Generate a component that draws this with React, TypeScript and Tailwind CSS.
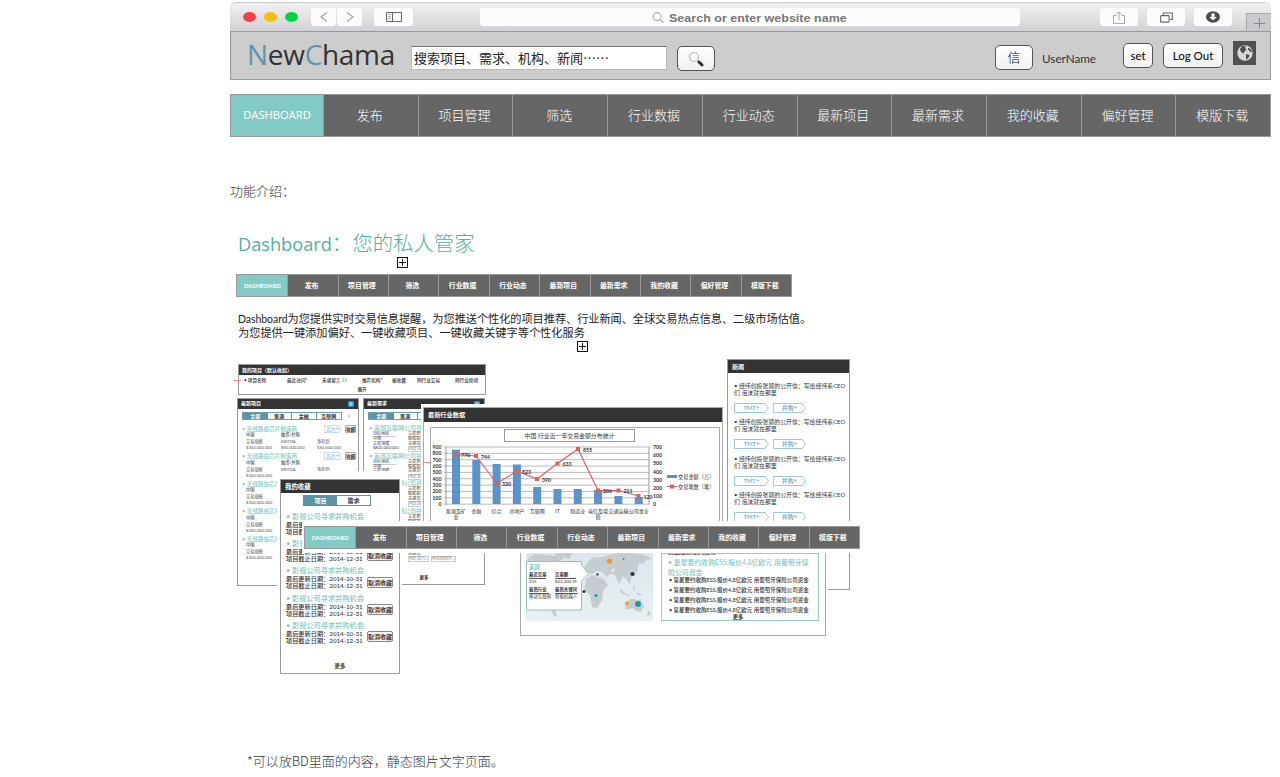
import React from "react";

const NAV = ["DASHBOARD", "发布", "项目管理", "筛选", "行业数据", "行业动态", "最新项目", "最新需求", "我的收藏", "偏好管理", "模版下载"];

function MiniNav() {
  return (
    <div className="grid h-[23px] w-[556px] grid-cols-11 border border-[#999] bg-[#666] text-[6.9px] font-bold leading-none text-white">
      {NAV.map((n, i) => (
        <div
          key={n}
          className={
            i === 0
              ? "flex items-center justify-center bg-[#84cac4] font-['Lato','Noto_Sans_CJK_SC',sans-serif] text-[5.9px]"
              : "flex items-center justify-center border-l border-[#999] pr-[3px]"
          }
        >
          {n}
        </div>
      ))}
    </div>
  );
}

function Cross() {
  return (
    <svg width="11" height="11" viewBox="0 0 11 11" fill="none" stroke="#111">
      <rect x=".5" y=".5" width="10" height="10" fill="#fff" />
      <path d="M5.5 2v7M2 5.5h7" />
    </svg>
  );
}

function ChromeButton({ className, children }: { className: string; children: React.ReactNode }) {
  return <div className={"flex h-[18px] items-center justify-center rounded-[3px] bg-[#fcfcfc] " + className}>{children}</div>;
}

function BrowserBar() {
  return (
    <div className="flex h-[29px] items-center rounded-t-[6px] border-t border-[#cfcdd0] bg-linear-to-b from-[#f1f0f2] to-[#d3d1d5] pl-[13px]">
      <div className="flex gap-2">
        <i className="h-[10px] w-[13px] rounded-[50%] bg-[#fc3f44]" />
        <i className="h-[10px] w-[13px] rounded-[50%] bg-[#fdbc09]" />
        <i className="h-[10px] w-[13px] rounded-[50%] bg-[#04d53f]" />
      </div>
      <ChromeButton className="ml-[13px] w-[25px]">
        <svg width="8" height="12" viewBox="0 0 8 12" fill="none" stroke="#a5a5a5" strokeWidth="1.2"><path d="M7 1.5 1 6l6 4.5" /></svg>
      </ChromeButton>
      <ChromeButton className="ml-[1px] w-[25px]">
        <svg width="8" height="12" viewBox="0 0 8 12" fill="none" stroke="#a5a5a5" strokeWidth="1.2"><path d="m1 1.5 6 4.5-6 4.5" /></svg>
      </ChromeButton>
      <ChromeButton className="ml-[12px] w-[39px]">
        <svg width="16" height="10" viewBox="0 0 16 10" fill="none" stroke="#666"><path d="M.5.5h15v9H.5zM6.5.5v9" /><path d="M2 2.5h3M2 4.5h3M2 6.500h3" strokeWidth=".7" stroke="#999" /></svg>
      </ChromeButton>
      <ChromeButton className="ml-[67px] w-[540px] gap-[5px]">
        <svg width="12" height="11" viewBox="0 0 12 11" fill="none" stroke="#aaa" strokeWidth="1.1"><circle cx="5" cy="4.600" r="4" /><path d="m8 7.500 3.500 3" /></svg>
        <span className="w-[180px] whitespace-nowrap">
          <span className="block w-[150px] origin-left scale-x-[1.19] pt-px font-['Liberation_Sans',sans-serif] text-[10.5px] font-bold leading-[12px] tracking-[0.02px] text-[#777]">Search or enter website name</span>
        </span>
      </ChromeButton>
      <ChromeButton className="ml-[80px] w-[38px]">
        <svg width="12" height="13" viewBox="0 0 12 13" fill="none" stroke="#aaa"><path d="M3.500 4.500h-3v8h11v-8h-3M6 9V1M3.500 3.200 6 .8l2.500 2.400" /></svg>
      </ChromeButton>
      <ChromeButton className="ml-[9px] w-[38px]">
        <svg width="13" height="11" viewBox="0 0 13 11" fill="none" stroke="#666" strokeWidth="1.1"><rect x=".6" y="3.600" width="8.500" height="6.500" rx=".8" /><path d="M3.300 3V1h9v6.500H10" /></svg>
      </ChromeButton>
      <ChromeButton className="ml-[9px] w-[38px]">
        <svg width="14" height="12" viewBox="0 0 14 12"><ellipse cx="7" cy="6" rx="7" ry="5.700" fill="#4a4a4a" /><path d="M5.500 2.500h3V6h2.300L7 9.500 3.200 6h2.300z" fill="#fff" /></svg>
      </ChromeButton>
      <div className="ml-auto flex h-[18px] w-[25px] items-center justify-center self-end border-l border-t border-[#aaa] bg-[#cbc9cd]">
        <svg width="11" height="10" viewBox="0 0 11 10" stroke="#888"><path d="M5.500 0v10M0 5.500h11" /></svg>
      </div>
    </div>
  );
}

const BTN = "flex h-[25px] items-center justify-center rounded-[5px] border border-[#555] bg-linear-to-b from-white to-[#f0f0f0] text-black";

function AppHeader() {
  return (
    <div className="flex h-[49px] items-start border border-[#999] bg-[#ccc] font-['Lato','Noto_Sans_CJK_SC',sans-serif]">
      <div className="ml-[16px] mt-[7px] w-[150px] whitespace-nowrap font-['Open_Sans',sans-serif] text-[28px] leading-[31px] tracking-[-0.3px] text-[#333]">
        <span className="text-[#5d95ab]">N</span>ew<span className="text-[#5d95ab]">C</span>hama
      </div>
      <div lang="zh-CN" className="ml-[14px] mt-[14px] flex h-[24px] w-[256px] items-center whitespace-nowrap border border-[#bbb] border-t-[#777] bg-white pl-[2px] font-['Noto_Sans_CJK_SC',sans-serif] text-[13px] text-[#222]">
        搜索项目、需求、机构、新闻⋯⋯
      </div>
      <div className={BTN + " ml-[10px] mt-[14px] w-[38px]"}>
        <svg width="16" height="16" viewBox="0 0 16 16" fill="none"><circle cx="6" cy="6" r="4.500" stroke="#bbb" strokeWidth="1.200" /><path d="m10 10 1.500 1.500" stroke="#777" strokeWidth="2" /><path d="m11 11 3 3" stroke="#333" strokeWidth="3" strokeLinecap="round" /></svg>
      </div>
      <div className={BTN + " ml-[280px] mt-[13px] w-[38px] text-[13px] font-light"}>信</div>
      <div className="ml-[9px] mt-[18px] w-[60px] text-[11.7px] leading-[16px] text-[#333]">UserName</div>
      <div className={BTN + " ml-[21px] mt-[11px] w-[30px] text-[11.5px]"}>set</div>
      <div className={BTN + " ml-[10px] mt-[11px] w-[60px] text-[11.5px]"}>Log Out</div>
      <div className="ml-[10px] mt-[9px] flex h-[24px] w-[23px] items-center justify-center bg-[#505050]">
        <svg width="16" height="16" viewBox="0 0 16 16"><circle cx="8" cy="8" r="7.700" fill="#d8d8d8" /><path d="M5 1.200 9 .8 8 3l1.500 1.500L8 6 6.500 8.500 4 7 3 4zM11 2.500l3 2 1.500 3-2.500-1-2-2zM9 9l3.500 1-1 3-2.500 1.500z" fill="#505050" /></svg>
      </div>
    </div>
  );
}

function MainNav() {
  return (
    <div className="flex h-[43px] border border-[#999] bg-[#666] text-[13px] font-light text-white">
      {NAV.map((n, i) => (
        <div
          key={n}
          className={
            i === 0
              ? "flex w-[92px] items-center justify-center bg-[#84cac4] font-['Open_Sans',sans-serif] text-[11.2px] font-normal"
              : "flex flex-1 items-center justify-center border-l border-[#999] pb-[2px] pr-[2px]"
          }
        >
          {n}
        </div>
      ))}
    </div>
  );
}

const HEAD = "flex items-center bg-[#333] font-bold text-white";

function Tag({ children, className }: { children: React.ReactNode; className: string }) {
  return (
    <div className={"relative flex items-center justify-center text-[#6b9fb3] " + className}>
      <svg className="absolute inset-0 h-full w-full" viewBox="0 0 34 10" preserveAspectRatio="none" fill="none" stroke="#8bb8c8" strokeWidth=".8"><path d="M.5.500h29.500L33.500 5 30 9.500H.5z" /></svg>
      <span className="relative">{children}</span>
    </div>
  );
}

function MyProjects() {
  return (
    <div className="absolute left-[8px] top-[9px] h-[31px] w-[248px] border border-[#999] bg-white text-[4.6px] font-medium leading-[6px] text-[#333]">
      <div className={HEAD + " h-[10px] pl-[3px] text-[5px]"}>我的项目（默认收起）</div>
      <div className="mt-[2px] flex whitespace-nowrap">
        <span className="w-[43px] pl-[5px]">• 项目名称</span>
        <span className="w-[35px] pl-[5px]">最近访问<b className="text-red-600">*</b></span>
        <span className="w-[40px] pl-[5px]">未读留言 <span className="text-[#4a98d0]">15</span></span>
        <span className="w-[30px] pl-[5px]">推荐机构<b className="text-red-600">*</b></span>
        <span className="w-[25px] pl-[5px]">被收藏</span>
        <span className="w-[38px] pl-[5px]">同行业交易</span>
        <span className="pl-[5px]">同行业新闻</span>
      </div>
      <div className="mt-[3px] text-center">展开</div>
    </div>
  );
}

function Gear() {
  return <svg width="6" height="6" viewBox="0 0 6 6"><rect width="6" height="6" rx="1" fill="#1598e8" /><circle cx="3" cy="3" r="1.300" fill="none" stroke="#fff" strokeWidth=".8" /></svg>;
}

function PanelTabs() {
  return (
    <div className="mt-[3px] flex h-[8px] items-center pl-[4px] text-[5px] leading-none text-[#333]">
      <div className="grid h-[8px] w-[100px] shrink-0 grid-cols-4 border border-[#6d9eae]">
        <b className="flex items-center justify-center bg-[#5b93a7] text-white">全部</b>
        <b className="flex items-center justify-center border-r border-[#6d9eae]">能源</b>
        <b className="flex items-center justify-center border-r border-[#6d9eae]">金融</b>
        <b className="flex items-center justify-center">互联网</b>
      </div>
      <span className="ml-[5px] text-[6px] text-[#5b93a7]">&gt;</span>
    </div>
  );
}

function LatestProjects() {
  return (
    <div className="absolute left-[7px] top-[43px] h-[188px] w-[122px] overflow-hidden border border-[#999] bg-white">
      <div className={HEAD + " h-[10px] justify-between pl-[3px] pr-[4px] text-[5px]"}>最新项目<Gear /></div>
      <PanelTabs />
      <div className="mt-[5px]">
        {[0, 1, 2, 3, 4].map((k) => (
          <div key={k} className="h-[27.500px] whitespace-nowrap pl-[4px] text-[4.200px] leading-[6px] text-[#555]">
            <div className="flex h-[7px] items-center">
              <span className="w-[82px] text-[5.6px] font-medium text-[#84cac4]">• 无线路由芯片制造商</span>
              <Tag className="h-[8px] w-[17px] text-[5px]">芯片+</Tag>
              <b className="ml-[4px] flex h-[8px] w-[11px] items-center justify-center rounded-[1px] border border-[#aaa] text-[4.600px] text-[#333]">收藏</b>
            </div>
            <div className="flex text-[#222]"><span className="w-[39px] pl-[4px]">中国</span><span>融资/并购</span></div>
            <div className="mt-px flex"><span className="w-[39px] pl-[4px]">交易规模</span><span className="w-[36px]">EBITDA</span><span>净利润</span></div>
            <div className="flex"><span className="w-[39px] pl-[4px]">$300,000,000</span>{k === 0 && <><span className="w-[36px]">$50,000,000</span><span>$50,000,000</span></>}</div>
          </div>
        ))}
      </div>
    </div>
  );
}

function LatestDemands() {
  return (
    <div className="absolute left-[133px] top-[43px] h-[187px] w-[122px] overflow-hidden border border-[#999] bg-white">
      <div className={HEAD + " h-[10px] justify-between pl-[3px] pr-[4px] text-[5px]"}>最新需求<Gear /></div>
      <PanelTabs />
      <div className="mt-[4px]">
        {[0, 1, 2, 3, 4].map((k) => (
          <div key={k} className="h-[27.500px] whitespace-nowrap pl-[5px] text-[4.100px] leading-[4.400px] text-[#444]">
            <div className="text-[6px] font-medium leading-[8px] text-[#84cac4]">• 美国互联网公司并购机会</div>
            <div className="flex"><span className="ml-[4px] w-[23px] border-b border-[#ccc]">目标地区</span><span className="ml-[12px] border-b border-[#ccc]">交易类型</span></div>
            <div className="flex"><span className="w-[39px] pl-[4px]">中国</span><span>股权投资/并购</span></div>
            <div className="flex"><span className="w-[39px] pl-[4px]">交易规模</span><span>关键词</span></div>
            <div className="flex"><span className="w-[39px] pl-[4px]">$800,000,000</span><span className="border border-[#ccc] leading-[4px] text-[#888]">电影发行+</span><span className="ml-[2px] border border-[#ccc] leading-[4px] text-[#888]">电视剧制作+</span></div>
          </div>
        ))}
      </div>
      <div className="mt-[12px] text-center text-[4.500px] font-bold leading-[7px] text-[#333]">更多</div>
    </div>
  );
}

function News() {
  return (
    <div className="absolute left-[497px] top-[4px] h-[231px] w-[123px] overflow-hidden border border-[#999] bg-white">
      <div className={HEAD + " h-[13px] pl-[4px] text-[6px]"}>新闻</div>
      <div className="mt-[9px]">
        {[0, 1, 2, 3].map((k) => (
          <div key={k} className="h-[36.300px] pl-[6px] text-[5.9px] leading-[7px] text-[#333]">
            <div className="whitespace-nowrap">• 经纬创投张颖的公开信：写给经纬系CEO</div>
            <div>们 泡沫就在那里</div>
            <div className="mt-[7px] flex gap-[4px] text-[6px] font-medium leading-none"><Tag className="h-[10px] w-[35px]">TMT+</Tag><Tag className="h-[10px] w-[33px]">并购+</Tag></div>
          </div>
        ))}
      </div>
    </div>
  );
}

const BARS = [54.300, 44, 40, 39.500, 17, 15, 15, 14, 8, 7];
const LINE = [[34, 50.700, "770"], [54, 52, "744"], [75, 79.500, "320"], [95, 67, "523"], [115, 75, "390"], [135.500, 59.500, "633"], [156, 45, "855"], [176, 86.500, "206"], [196.500, 86.500, "211"], [216.500, 92, "120"]] as const;
const CATS = ["能源及矿", "金融", "综合", "房地产", "互联网", "IT", "制造业", "电信及增", "交通运输", "公司事业"];

function IndustryChart() {
  return (
    <div className="absolute left-[191px] top-[49px] h-[122px] w-[305px] bg-white p-[2px] pt-[3px]">
      <div className="h-full w-[300px] border border-[#aaa]">
        <div className={HEAD + " h-[14px] pl-[4px] text-[6.200px]"}>最新行业数据</div>
        <svg width="298" height="99" viewBox="2 18 298 99" fontFamily="Lato, 'Noto Sans CJK SC', sans-serif" fontSize="5.200" fill="#333">
          <path d="M8.500 118V23.500h289V118" fill="none" stroke="#aaa" />
          <rect x="82.500" y="25.500" width="130" height="12" fill="#fff" stroke="#999" />
          <text x="147.500" y="34" textAnchor="middle" fontSize="5.900">中国 行业近一年交易金额分布统计</text>
          {[0, 1, 2, 3, 4, 5, 6, 7, 8, 9].map((i) => (
            <g key={i}>
              <path d={`M22 ${43 + i * 6.35}h205`} stroke="#bbb" />
              <text x="19.500" y={45 + i * 6.35} textAnchor="end" fontWeight="700">{900 - i * 100}</text>
            </g>
          ))}
          {[0, 1, 2, 3, 4, 5, 6, 7].map((i) => (
            <text key={i} x="231" y={45 + i * 8.2} fontWeight="700">{700 - i * 100}</text>
          ))}
          <path d="M24 43v57.500M227 43v57.500" stroke="#999" />
          {BARS.map((h, i) => <rect key={i} x={30 + i * 20.3} y={100 - h} width="8" height={h} fill="#5b93cb" />)}
          <polyline points={LINE.map((p) => `${p[0]},${p[1]}`).join(" ")} fill="none" stroke="#d9625c" strokeWidth="1.200" />
          {LINE.map((p, i) => (
            <g key={i}>
              <rect x={p[0] - 2} y={p[1] - 2} width="4" height="4" fill="#d9625c" />
              <text x={p[0] + 5} y={p[1] + 2.500} fontWeight="700">{p[2]}</text>
            </g>
          ))}
          {CATS.map((c, i) => <text key={c} x={34 + i * 20.3} y="109" textAnchor="middle" fontSize="5">{c}</text>)}
          <text x="34" y="115" textAnchor="middle">业</text>
          <text x="176" y="115" textAnchor="middle">值</text>
          <path d="M245 72.500h10" stroke="#5b93cb" strokeWidth="3" />
          <text x="256" y="74.500">交易金额（万）</text>
          <path d="M245 82.500h10" stroke="#d9625c" />
          <rect x="248" y="80.500" width="4" height="4" fill="#d9625c" />
          <text x="256" y="84.500">交易笔数（笔）</text>
        </svg>
      </div>
    </div>
  );
}

function Favorites() {
  return (
    <div className="absolute left-[47px] top-[116px] h-[204px] w-[125px] bg-white px-[3px] pt-[8px]">
      <div className="h-[195px] w-[120px] border border-[#999]">
        <div className={HEAD + " h-[13px] pl-[4px] text-[6.400px]"}>我的收藏</div>
        <div className="ml-[22px] mt-[2px] grid h-[11px] w-[68px] grid-cols-2 border border-[#5b93a7] text-[6px] font-bold leading-none">
          <span className="flex items-center justify-center bg-[#5b93a7] text-white">项目</span>
          <span className="flex items-center justify-center text-[#333]">需求</span>
        </div>
        <div className="mt-[6px]">
          {[0, 1, 2, 3, 4].map((k) => (
            <div key={k} className="h-[27.200px] whitespace-nowrap pl-[5px] text-[6.200px] leading-[7px] text-[#333]">
              <div className="text-[7.200px] font-medium leading-[9px] text-[#84cac4]">• 影视公司寻求并购机会</div>
              <div className="flex items-center">
                <div className="w-[81px] font-medium">
                  <div>最后更新日期：2014-10-31</div>
                  <div>项目截止日期：2014-12-31</div>
                </div>
                <b className="flex h-[11px] w-[26px] items-center justify-center rounded-[2px] border border-[#888] bg-[#fafafa] text-[6px]">取消收藏</b>
              </div>
            </div>
          ))}
        </div>
        <div className="mt-[14px] text-center text-[5.500px] font-bold leading-[8px] text-[#333]">更多</div>
      </div>
    </div>
  );
}

function WorldMap() {
  return (
    <svg width="127" height="68" viewBox="0 0 127 68">
      <defs><linearGradient id="sea" x2="0" y2="1"><stop stopColor="#dce6eb" /><stop offset="1" stopColor="#e7eff2" /></linearGradient></defs>
      <rect width="127" height="68" fill="url(#sea)" />
      <g fill="#c6cdd0">
        <path d="M2 5 9 1l11 1 8 1 3-3h9l-3 6-6 4-6 6-3 6-7-3-5-7-8-2zM39 0h8l-4 6-4-1z" />
        <path d="M23 27l7 2 5 8-4 9-2 10 2 8-4-2-3-12-4-12z" />
        <path d="M60 26l5-4 8 2 5 2 4 6-5 6-1 9-5 8-5-1-2-12-6-5z" />
        <path d="M58 15l4-6 5-5 6 1 9-3 10-2h14l13 2 7 4-6 1-3 4-4-1-1 6-3 6-4 3-1 6-4-5-3-3-4 8-4-9-5-1-3 3-5-5-5-1-5 3-4-1z" />
        <path d="M94 36l6 5 5 1-3 1-7-3zM107 31l3 7-3-2zM110 39l7 3-5 0z" />
        <path d="M99 50l6-4 4 0 2 2 3-2 4 7-3 6-5-1-3-3-7 2zM122 57l3 4-4 3z" />
      </g>
      <circle cx="83.500" cy="8" r="2.600" fill="#f59a13" /><circle cx="97.500" cy="6" r="1" fill="#2b91b0" />
      <circle cx="87" cy="17" r="1.600" fill="#eee" /><circle cx="106.500" cy="21" r="2.100" fill="#333" />
      <circle cx="71.500" cy="21.500" r="1.200" fill="#444" /><circle cx="58" cy="38.500" r="1.500" fill="#333" />
      <circle cx="70" cy="42.500" r="1.600" fill="#2b91b0" /><circle cx="101" cy="50.500" r="1.800" fill="#f59a13" />
      <circle cx="112" cy="51" r="2.900" fill="#1e93b5" />
      <path d="M.5 8.500h55v4l7 8-7 8v28.500H.5z" fill="#fff" stroke="#93c0c9" />
    </svg>
  );
}

function Hotspots() {
  return (
    <div className="absolute left-[288px] top-[166px] h-[118px] w-[310px] bg-white px-[2px]">
      <div className="flex h-[115px] w-[306px] border border-[#aaa] pl-[5px] pt-[31px]">
        <div className="relative h-[68px] w-[127px]">
          <WorldMap />
          <div className="absolute left-[3px] top-[10px] whitespace-nowrap text-[4.400px] leading-[6px] text-[#333]">
            <div className="text-[5.500px] font-bold leading-[8px] text-[#84cac4]">美国</div>
            <div className="grid grid-cols-[26px_26px] pt-px">
              <b className="w-[17px] border-b border-[#555]">最近交易</b><b className="w-[21px] border-b border-[#555]">交易额</b>
              <span>235</span><span>$22,200 M</span>
              <b className="mt-[2px] w-[20px] border-b border-[#555]">最热行业</b><b className="mt-[2px] w-[23px] border-b border-[#555]">最热关键词</b>
              <span>移动互联网</span><span>智能机器人</span>
            </div>
          </div>
        </div>
        <div className="ml-[8px] h-[68px] w-[158px] overflow-hidden border border-[#9cc8cc] pl-[6px] text-[#333]">
          <div className="-mt-[6px] text-[6px] font-bold leading-[8px]">美国最新重大交易</div>
          <div className="mt-[2px] whitespace-nowrap text-[6.900px] font-medium leading-[9.500px] text-[#84cac4]">• 复星要约收购ESS:报价4.8亿欧元 用葡萄牙保<br />险公司资金</div>
          {[0, 1, 2, 3].map((k) => (
            <div key={k} className="h-[10px] whitespace-nowrap pl-px text-[5.500px] font-medium leading-[7px]">• 复星要约收购ESS:报价4.8亿欧元 用葡萄牙保险公司资金</div>
          ))}
          <div className="-mt-[3px] pr-[10px] text-center text-[5.300px] font-bold leading-[7px]">更多</div>
        </div>
      </div>
    </div>
  );
}

export default function App() {
  return (
    <div className="h-[777px] w-[1280px] overflow-hidden bg-white pl-[230px] pt-[2px] font-['Noto_Sans_CJK_SC',sans-serif] text-[#333]">
      <div className="w-[1041px]">
        <BrowserBar />
        <AppHeader />
        <div className="mt-[14px]"><MainNav /></div>
        <p className="mt-[44px] h-[20px] text-[13px] font-light leading-[20px]">功能介绍：</p>
        <div className="relative mt-[26px] h-[47px] pl-[8px]">
          <h1 className="whitespace-nowrap text-[20.400px] font-light leading-[30px] text-[#4fb0a5]">
            <span className="font-['Open_Sans',sans-serif] text-[18.200px] font-normal">Dashboard</span>：您的私人管家
          </h1>
          <div className="absolute left-[167px] top-[30px]"><Cross /></div>
        </div>
        <div className="ml-[6px]"><MiniNav /></div>
        <div className="relative mt-[15px] h-[43px] pl-[8px] text-[11.200px] leading-[13px] text-[#222]">
          <p className="whitespace-nowrap tracking-[-0.05px]"><span className="font-['Lato',sans-serif] text-[10.500px]">Dashboard</span>为您提供实时交易信息提醒，为您推送个性化的项目推荐、行业新闻、全球交易热点信息、二级市场估值。</p>
          <p>为您提供一键添加偏好、一键收藏项目、一键收藏关键字等个性化服务</p>
          <div className="absolute left-[347px] top-[29px]"><Cross /></div>
        </div>
        <div className="relative h-[395px] font-['Lato','Noto_Sans_CJK_SC',sans-serif]">
          <MyProjects />
          <LatestProjects />
          <LatestDemands />
          <News />
          <Hotspots />
          <IndustryChart />
          <Favorites />
          <svg className="absolute left-[4px] top-[25px]" width="7" height="1" viewBox="0 0 7 1"><path d="M0 .5h7" stroke="#f08a8a" /></svg>
          <svg className="absolute left-[193px] top-[107px]" width="8" height="1" viewBox="0 0 8 1"><path d="M0 .5h8" stroke="#f08a8a" /></svg>
          <div className="absolute left-[72px] top-[166px] h-[32px] w-[560px] bg-white pl-[2px] pt-[5px]"><MiniNav /></div>
        </div>
        <p className="pl-[17px] text-[13px] font-light leading-[22px]">*可以放BD里面的内容，静态图片文字页面。</p>
      </div>
    </div>
  );
}
